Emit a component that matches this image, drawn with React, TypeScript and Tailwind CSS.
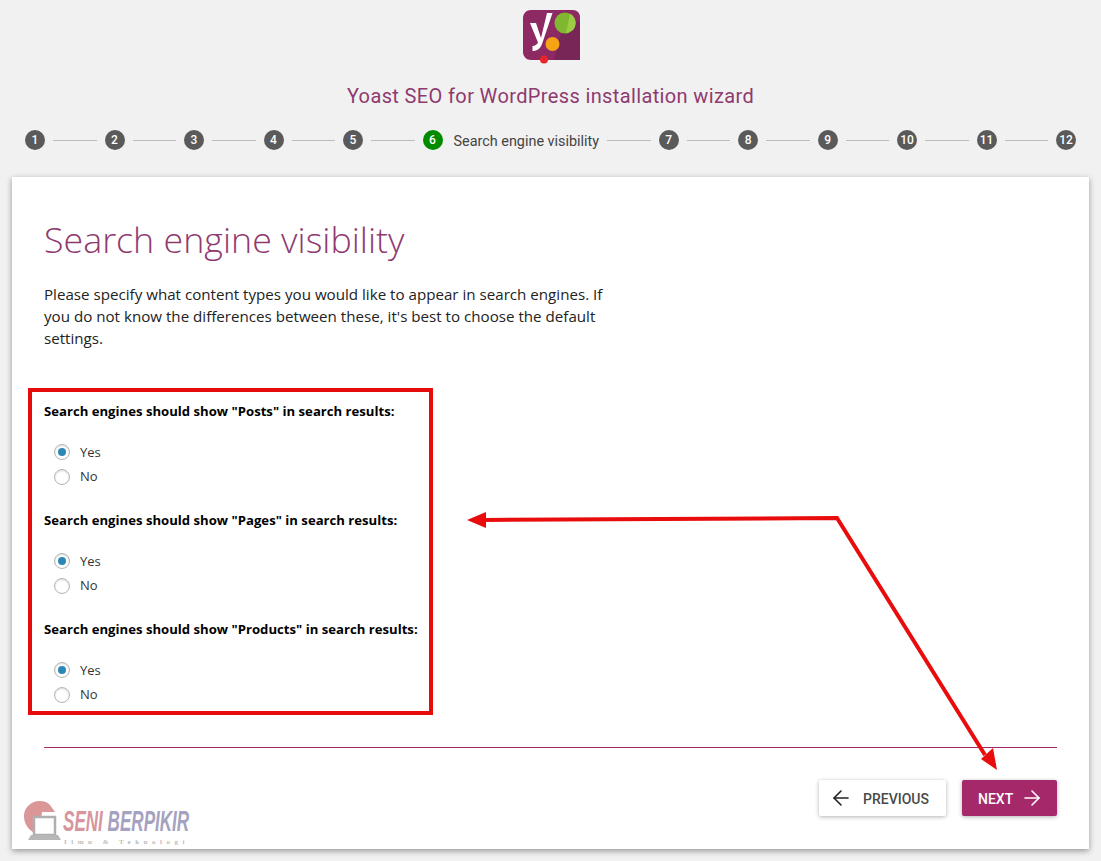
import React from "react";
import { ArrowLeft, ArrowRight } from "lucide-react";

const before = [1, 2, 3, 4, 5];
const after = [7, 8, 9, 10, 11, 12];

function StepDot({ n, active }: { n: number; active?: boolean }) {
  return (
    <span
      className={`flex h-5 w-5 shrink-0 items-center justify-center rounded-full text-[12px] font-medium text-white ${
        active ? "bg-[#008a00]" : "bg-[#5a5a5a]"
      }`}
    >
      {n}
    </span>
  );
}

function Line() {
  return <span className="mx-2 h-px flex-1 bg-[#bdbdbd]" />;
}

function Logo() {
  return (
    <svg width="58" height="55" viewBox="0 0 58 55" className="block">
      <path d="M8 0H50C54 0 57 3 57 7V50H8C3.500 50 0 46.500 0 42V8C0 3.500 3.500 0 8 0Z" fill="#8d2a63" />
      <path d="M31 50H57V12L42 8Z" fill="#782558" />
      <circle cx="42" cy="13" r="10.500" fill="#7fb82f" />
      <path d="M47 3.700A10.500 10.500 0 0 1 50 20L43 23.500Z" fill="#9ccb45" />
      <circle cx="29.500" cy="34" r="7" fill="#f6a416" />
      <circle cx="21" cy="49.500" r="4" fill="#e8262a" />
      <path d="M7 13H13L18 28L24 3H29.500L19 34C17.500 38.500 14 41 9.500 41V36C12 36 14 34.500 15 32.500L7 13Z" fill="#fff" />
    </svg>
  );
}

function Watermark() {
  return (
    <div className="absolute left-[10px] top-[623px] flex items-start opacity-70">
      <svg width="41" height="42" viewBox="0 0 41 42" className="shrink-0">
        <path d="M6 6C12 -1 24 0 28 5L33 12H20L19 22H11V32C3 28 -2 14 6 6Z" fill="#cc6c6c" />
        <rect x="12" y="17" width="21" height="18" fill="#fff" stroke="#8e8e8e" strokeWidth="2.500" />
        <path d="M9 35H36L39 40H6Z" fill="#9a9a9a" />
      </svg>
      <div className="mt-[6px] flex flex-col">
        <div className="origin-left scale-x-[0.569] whitespace-nowrap font-['Liberation_Sans',sans-serif] text-[30px] font-bold italic leading-[29px]">
          <span className="text-[#c46a74]">SENI </span>
          <span className="text-[#7f7aa6]">BERPIKIR</span>
        </div>
        <div className="ml-[1px] mt-[3px] whitespace-nowrap font-['Liberation_Serif',serif] text-[7px] font-bold leading-[8px] tracking-[4.500px] text-[#a0a0a0]">
          Ilmu &amp; Teknologi
        </div>
      </div>
    </div>
  );
}

function Radio({ label, checked }: { label: string; checked?: boolean }) {
  return (
    <div className="flex h-[24.500px] items-center pl-[10px]">
      <span className="flex h-4 w-4 items-center justify-center rounded-full border border-[#b5b5b5] bg-white shadow-[inset_0_1px_2px_rgba(0,0,0,0.15)]">
        {checked && <span className="h-2 w-2 rounded-full bg-[#2c87b5]" />}
      </span>
      <span className="ml-[10px] text-[13px] text-[#333]">{label}</span>
    </div>
  );
}

function Question({ type }: { type: string }) {
  return (
    <div className="mb-[21px] last:mb-0">
      <div className="text-[13.150px] font-bold leading-[20px] text-black">
        Search engines should show "{type}" in search results:
      </div>
      <div className="mt-[19px]">
        <Radio label="Yes" checked />
        <Radio label="No" />
      </div>
    </div>
  );
}

function Arrows() {
  return (
    <svg
      className="pointer-events-none absolute left-0 top-0"
      width="1101"
      height="861"
      viewBox="0 0 1101 861"
    >
      <path d="M482 520L837 518L985 755" fill="none" stroke="#e80c0c" strokeWidth="4" />
      <path d="M467 520L486 512V528Z" fill="#e80c0c" />
      <path d="M997 770L981 759L993 748Z" fill="#e80c0c" />
    </svg>
  );
}

export default function App() {
  return (
    <div className="relative h-[861px] w-[1101px] overflow-hidden bg-[#f1f1f1] font-['Open_Sans',sans-serif]">
      <div className="flex justify-center pl-[3px] pt-[10px]">
        <Logo />
      </div>

      <h1 className="mt-[16px] text-center font-['Roboto',sans-serif] text-[20px] font-normal leading-[30px] tracking-[0.37px] text-[#8f3a6f]">
        Yoast SEO for WordPress installation wizard
      </h1>

      <div className="mt-[19px] flex h-5 items-center px-[25px] font-['Roboto',sans-serif]">
        {before.map((n) => (
          <React.Fragment key={n}>
            <StepDot n={n} />
            <Line />
          </React.Fragment>
        ))}
        <StepDot n={6} active />
        <span className="ml-[11px] whitespace-nowrap pt-[4px] text-[14.400px] text-[#444]">
          Search engine visibility
        </span>
        {after.map((n) => (
          <React.Fragment key={n}>
            <Line />
            <StepDot n={n} />
          </React.Fragment>
        ))}
      </div>

      <div className="relative ml-[12px] mt-[27px] h-[672px] w-[1077px] bg-white px-[32px] pt-[39px] shadow-[0_2px_6px_rgba(0,0,0,0.38)]">
        <h2 className="text-[35.800px] font-light leading-[46px] text-[#8f3a6f]">
          Search engine visibility
        </h2>
        <p className="mt-[21px] w-[575px] text-[15.150px] leading-[22px] text-[#222]">
          Please specify what content types you would like to appear in search engines. If you do not know the differences between these, it's best to choose the default settings.
        </p>

        <div className="-ml-[16px] mt-[39px] h-[327px] w-[405px] border-4 border-[#e60c0c] pl-[12px] pt-[9px]">
          <Question type="Posts" />
          <Question type="Pages" />
          <Question type="Products" />
        </div>

        <div className="mt-[32px] h-px w-[1013px] bg-[#a4286a]" />

        <div className="mt-[32px] flex w-[1013px] justify-end gap-4 font-['Roboto',sans-serif] text-[14px]">
          <button className="flex h-[36px] w-[127px] items-center gap-[10px] rounded-[2px] bg-white pl-[10px] font-medium text-[#4a4a4a] shadow-[0_1px_4px_rgba(0,0,0,0.3)]">
            <ArrowLeft size={24} strokeWidth={1.600} className="text-[#222]" />
            <span className="pt-[3px]">PREVIOUS</span>
          </button>
          <button className="flex h-[36px] w-[95px] items-center gap-[7px] rounded-[2px] bg-[#a4286a] pl-[16px] font-medium text-white shadow-[0_1px_4px_rgba(0,0,0,0.3)]">
            <span className="pt-[3px]">NEXT</span>
            <ArrowRight size={24} strokeWidth={1.600} />
          </button>
        </div>

        <Watermark />
      </div>

      <Arrows />
    </div>
  );
}
